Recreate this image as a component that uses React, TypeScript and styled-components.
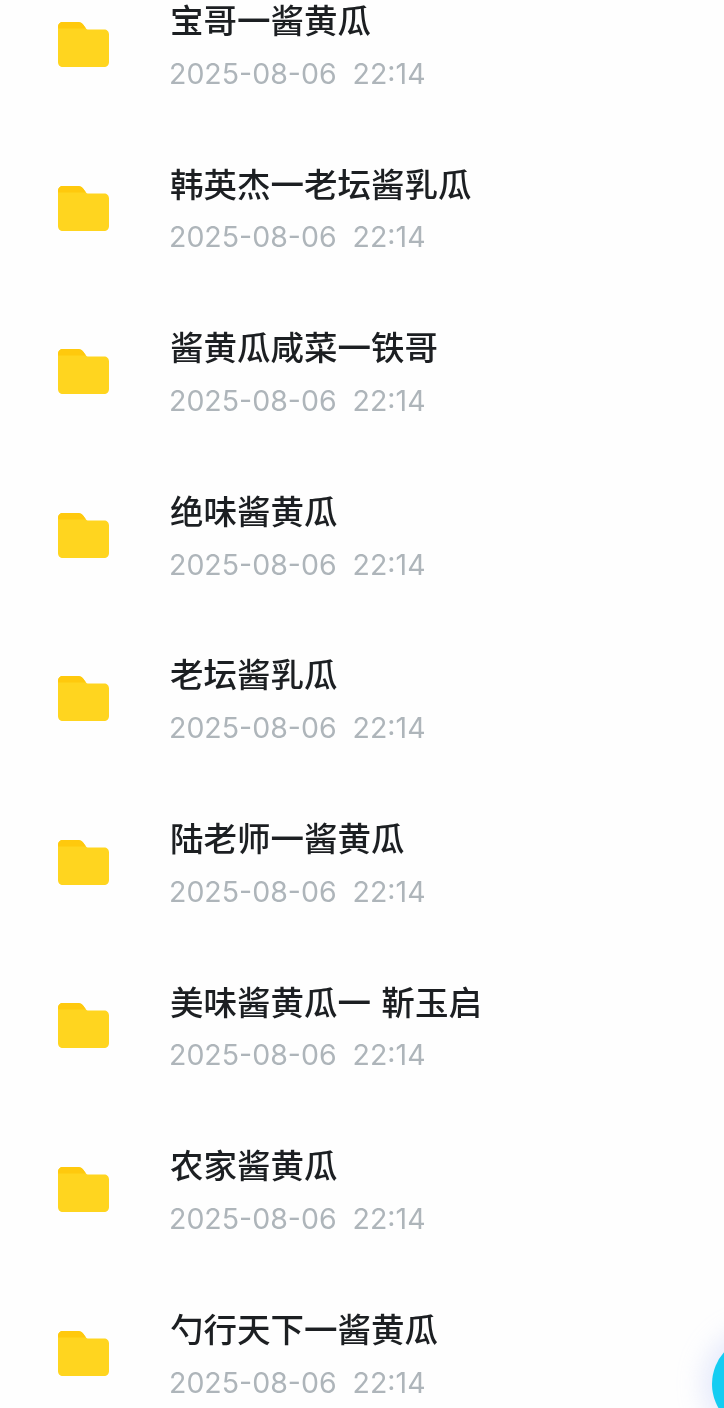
import React from "react";
import styled, { createGlobalStyle } from "styled-components";

const GlobalStyle = createGlobalStyle`
  html, body {
    margin: 0;
    padding: 0;
    background: #fff;
  }
`;

const Screen = styled.div`
  position: relative;
  width: 724px;
  height: 1408px;
  overflow: hidden;
  background: #fefefe;
  font-family: "Noto Sans CJK SC", "Noto Sans", sans-serif;
`;

const List = styled.div`
  display: flex;
  flex-direction: column;
  margin-top: -35.4px;
  filter: blur(0.5px);
`;

const Row = styled.div`
  display: flex;
  align-items: center;
  height: 163.6px;
  flex-shrink: 0;
  padding-left: 58px;
  gap: 61px;
`;

const FolderIcon = styled.svg`
  width: 51px;
  height: 45px;
  flex-shrink: 0;
  margin-bottom: 4px;
`;

const Info = styled.div`
  display: flex;
  flex-direction: column;
  gap: 18.8px;
`;

const Title = styled.div`
  font-size: 33.5px;
  font-weight: 500;
  line-height: 36px;
  word-spacing: 3px;
  color: #1c1f22;
  white-space: nowrap;
`;

const Time = styled.div`
  font-family: "Inter", "Noto Sans", sans-serif;
  font-size: 28.5px;
  line-height: 36px;
  margin-left: -1px;
  color: #aeb5ba;
  white-space: pre;
`;

const FloatButton = styled.div`
  position: absolute;
  left: 712px;
  top: 1336px;
  width: 96px;
  height: 96px;
  border-radius: 50%;
  background: #14cdf2;
  box-shadow: 0 0 24px 10px rgba(190, 200, 245, 0.35);
`;

const Folder = () => (
  <FolderIcon viewBox="0 0 51 45">
    <path
      d="M5 0h15c2.5 0 4 1 5.500 3l2.500 3.500c.6.8 1.200 1 2.500 1H46c3 0 5 2 5 5V40c0 3-2 5-5 5H5c-3 0-5-2-5-5V5c0-3 2-5 5-5z"
      fill="#ffd51f"
    />
    <path d="M5 0h15c2.500 0 4 1 5.500 3l2.500 3.500H0V5c0-3 2-5 5-5z" fill="#ffc90d" />
  </FolderIcon>
);

const titles = [
  "宝哥一酱黄瓜",
  "韩英杰一老坛酱乳瓜",
  "酱黄瓜咸菜一铁哥",
  "绝味酱黄瓜",
  "老坛酱乳瓜",
  "陆老师一酱黄瓜",
  "美味酱黄瓜一 靳玉启",
  "农家酱黄瓜",
  "勺行天下一酱黄瓜",
];

export default function App() {
  return (
    <Screen>
      <GlobalStyle />
      <List>
        {titles.map((title) => (
          <Row key={title}>
            <Folder />
            <Info>
              <Title>{title}</Title>
              <Time>2025-08-06  22:14</Time>
            </Info>
          </Row>
        ))}
      </List>
      <FloatButton />
    </Screen>
  );
}
